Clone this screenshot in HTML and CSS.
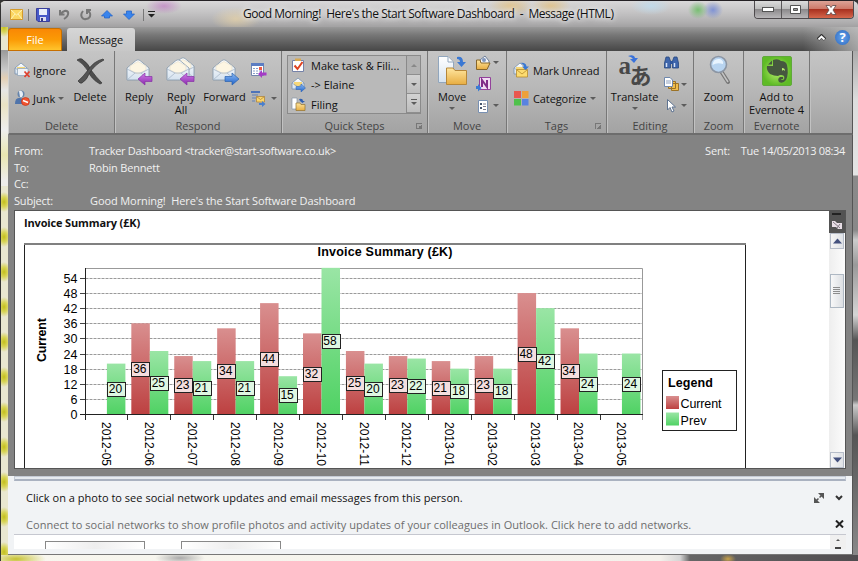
FILE: index.html
```html
<!DOCTYPE html>
<html lang="en">
<head>
  <meta charset="UTF-8">
  <title>Good Morning!  Here's the Start Software Dashboard - Message (HTML)</title>
  <link rel="stylesheet" href="styles.css">
</head>
<body>
  <svg class="defs" width="0" height="0">
    <defs>
      <linearGradient id="paper" x2="0" y2="1"><stop stop-color="#fff"/><stop offset="1" stop-color="#d5e2ef"/></linearGradient>
      <linearGradient id="folder" x2="0" y2="1"><stop stop-color="#ffe6a0"/><stop offset="1" stop-color="#e7ad41"/></linearGradient>
      <linearGradient id="purple" x2="0" y2="1"><stop stop-color="#d07be8"/><stop offset="1" stop-color="#8a2bae"/></linearGradient>
      <linearGradient id="blue" x2="0" y2="1"><stop stop-color="#8dbcf5"/><stop offset="1" stop-color="#1f62c9"/></linearGradient>
      <linearGradient id="red-bar" x2="0" y2="1"><stop stop-color="#d98f8f"/><stop offset="1" stop-color="#bd4141"/></linearGradient>
      <linearGradient id="green-bar" x2="0" y2="1"><stop stop-color="#9ae5a5"/><stop offset="1" stop-color="#50d264"/></linearGradient>
      <radialGradient id="lime"><stop stop-color="#b9f06e"/><stop offset="1" stop-color="#5fbb26"/></radialGradient>
      <g id="envelope">
        <path d="M2 11 11 3.500Q13 2 15 3.500L24 11V23H2z" fill="url(#paper)" stroke="#8295a8" stroke-width=".8"/>
        <path d="M5 9 13 4.500 21 9V13L13 17 5 13z" fill="#fdf6e3" stroke="#e2dccb" stroke-width=".6"/>
        <path d="M2 12 10 16H16L24 12M2 23 10 16M24 23 16 16" fill="none" stroke="#a8b8c8" stroke-width=".8"/>
      </g>
      <g id="mail-small">
        <path d="M1 6 7 1 13 6V12H1z" fill="url(#paper)" stroke="#7690ad" stroke-width=".8"/>
        <path d="M3 5H11V8L7 10 3 8z" fill="#f6d778"/>
        <path d="M1 6 7 10 13 6" fill="none" stroke="#8aa0b8" stroke-width=".8"/>
      </g>
    </defs>
  </svg>

  <div class="window">
    <header class="titlebar">
      <div class="quick">
        <svg class="q-mail" width="13" height="11" viewBox="0 0 13 11"><path d="M.5.5H12.500V10.500H.5z" fill="#fbd762" stroke="#d49a2b"/><path d="M1 1 6.500 6 12 1M1 10 5 5M12 10 8 5" fill="none" stroke="#fff3b8"/></svg>
        <i class="sep"></i>
        <svg class="q-save" width="14" height="14" viewBox="0 0 14 14"><path d="M.5.5H13.500V13.500H2L.5 12z" fill="#4759c8" stroke="#3a3f9c"/><path d="M3 1H11V7H3z" fill="#e9effa"/><path d="M4 9H10V13H4z" fill="#dde"/><path d="M5 10H7V13H5z" fill="#333b8a"/></svg>
        <svg class="q-undo" width="12" height="13" viewBox="0 0 12 13"><path d="M2 2V6.500H6.500M2.500 6Q7 1 10 4 11 8 6 11" fill="none" stroke="#777" stroke-width="2"/></svg>
        <svg class="q-redo" width="12" height="13" viewBox="0 0 12 13"><path d="M3 3C-1 8 3 12 6 11 12 10 11 3 7 3M7 6V2H11" fill="none" stroke="#777" stroke-width="2"/></svg>
        <svg class="q-up" width="12" height="9" viewBox="0 0 12 9"><path d="M6 .5 11.500 6H8.500V8H3.500V6H.5z" fill="#3984ed" stroke="#1d5fc6" stroke-width=".7"/></svg>
        <svg class="q-down" width="12" height="10" viewBox="0 0 12 10"><path d="M6 9.500 .5 4H3.500V1H8.500V4H11.500z" fill="#3984ed" stroke="#1d5fc6" stroke-width=".7"/></svg>
        <i class="sep"></i>
        <svg class="q-more" width="7" height="7" viewBox="0 0 7 7"><path d="M0 0H7V1H0zM0 3H7L3.500 6.500z" fill="#222"/></svg>
      </div>
      <div class="caption">Good Morning!  Here's the Start Software Dashboard  -  Message (HTML)</div>
      <div class="controls">
        <span class="control"><svg width="12" height="6"><rect x=".5" y=".5" width="11" height="4" fill="#fff" stroke="#555"/></svg></span>
        <span class="control"><svg width="11" height="9"><path d="M.5.5H10.500V8.500H.5z" fill="#fff" stroke="#555"/><path d="M3.500 3.500H7.500V5.500H3.500z" fill="#999" stroke="#555"/></svg></span>
        <span class="control close"><svg width="12" height="10" viewBox="0 0 12 10"><path d="M1 .5H4.500L6 2.500 7.500.5H11L8 5 11 9.500H7.500L6 7.500 4.500 9.500H1L4 5z" fill="#fff" stroke="#5a4a4a" stroke-width=".8"/></svg></span>
      </div>
    </header>

    <nav class="tabs">
      <span class="tab file">File</span>
      <span class="tab active">Message</span>
      <span class="help">
        <svg width="9" height="7" viewBox="0 0 9 7"><path d="M1 5.500 4.500 2 8 5.500" fill="none" stroke="#333" stroke-width="3.500"/><path d="M1.500 5.500 4.500 2.500 7.500 5.500" fill="none" stroke="#fff" stroke-width="1.800"/></svg>
        <span class="help-mark">?</span>
      </span>
    </nav>

    <section class="ribbon">
      <div class="group g-delete">
        <div class="tools">
          <div class="rows two">
            <div class="small"><svg width="17" height="16" viewBox="0 0 17 16"><use href="#mail-small"/><path d="M3.500 6.500H14V13.500H3.500z" fill="#eef3f8" stroke="#8aa0b8" stroke-width=".7"/><path d="M10.500 9.500 15.500 15M15.500 9.500 10.500 15" stroke="#e0412e" stroke-width="1.800"/></svg><span>Ignore</span></div>
            <div class="small"><svg width="17" height="16" viewBox="0 0 17 16"><circle cx="7" cy="4" r="3.500" fill="#6684ab"/><path d="M1 14Q1 7 6 8 11 8 11 14z" fill="#4f74ab"/><path d="M5 1Q9 0 9 5L8 7H6z" fill="#e8eef5"/><circle cx="11.500" cy="11.500" r="4" fill="#f25530" stroke="#c93016" stroke-width=".7"/><path d="M9 10.500 14 12.500" stroke="#fff" stroke-width="1.500"/></svg><span>Junk</span><i class="caret"></i></div>
          </div>
          <div class="big"><svg width="32" height="32" viewBox="0 0 32 32"><path d="M3 6Q6 4 8 5 15 10 17 16 22 23 28 29L26 30Q17 25 14 17 9 9 3 6z" fill="#4d4d4d" stroke="#353535" stroke-width=".7"/><path d="M29 5Q20 7 14 16 9 23 4 27 6 30 8 29 13 26 15 20 20 11 30 6z" fill="#555" stroke="#353535" stroke-width=".7"/></svg><span>Delete</span></div>
        </div>
        <div class="group-name">Delete</div>
      </div>

      <div class="group g-respond">
        <div class="tools">
          <div class="big"><svg width="30" height="32" viewBox="0 0 30 32"><use href="#envelope" x="1" y="3"/><path d="M14 25 21 19V22.500H28V27.500H21V31z" fill="url(#purple)" stroke="#8633a5" stroke-width=".7"/></svg><span>Reply</span></div>
          <div class="big"><svg width="30" height="32" viewBox="0 0 30 32"><use href="#envelope" x="4" y="1"/><use href="#envelope" x="-1" y="3"/><path d="M14 25 21 19V22.500H28V27.500H21V31z" fill="url(#purple)" stroke="#8633a5" stroke-width=".7"/></svg><span>Reply<br>All</span></div>
          <div class="big"><svg width="30" height="32" viewBox="0 0 30 32"><use href="#envelope" x="1" y="3"/><path d="M29 25 22 19V22.500H15V27.500H22V31z" fill="url(#blue)" stroke="#2b62ae" stroke-width=".7"/></svg><span>Forward</span></div>
          <div class="rows two">
            <div class="small"><svg width="17" height="16" viewBox="0 0 17 16"><path d="M1.500 1.500H13.500V13.500H1.500z" fill="#fff" stroke="#7286ad"/><path d="M1 1H14V4H1z" fill="#5c7dc2"/><path d="M3 6.500H12M3 9H12M3 11.500H10" stroke="#89a0c9" stroke-dasharray="2 1"/><path d="M9 5H12V8H9z" fill="#ef5b45"/><path d="M8 12 12 8V10.500H16.500V13.500H12V16z" fill="#a53bc5"/></svg></div>
            <div class="small"><svg width="17" height="17" viewBox="0 0 17 17"><path d="M1 2H10" stroke="#4e73b8" stroke-width="2"/><path d="M2 5H8M2 8H6M2 11H5" stroke="#7f93b5" stroke-width="1.500"/><path d="M6.500 6.500H14.500V12H6.500z" fill="#fbd66a" stroke="#af8540" stroke-width=".8"/><path d="M6.500 6.500 10.500 9.500 14.500 6.500" fill="none" stroke="#af8540" stroke-width=".8"/><path d="M9 13H12V11L15.500 14 12 17V15H9z" fill="#4a7fcd"/></svg><i class="caret"></i></div>
          </div>
        </div>
        <div class="group-name">Respond</div>
      </div>

      <div class="group g-quick">
        <div class="tools">
          <div class="gallery">
            <div class="steps">
              <div class="step"><svg width="15" height="15" viewBox="0 0 15 15"><path d="M1.500 2.500H12.500V13.500H1.500z" fill="#fff" stroke="#7582a8"/><path d="M4 .5H10V3H4z" fill="#d8a951"/><path d="M3.500 7.500 6.500 11 11.500 4" fill="none" stroke="#de4322" stroke-width="2"/></svg>Make task &amp; Fili...</div>
              <div class="step"><svg width="15" height="15" viewBox="0 0 15 15"><use href="#mail-small"/><path d="M14.500 11 10 7V9.500H5V12.500H10V15z" fill="url(#blue)" stroke="#2d62b2" stroke-width=".5"/></svg>-&gt; Elaine</div>
              <div class="step"><svg width="15" height="15" viewBox="0 0 15 15"><path d="M1 1H6V12H1z" fill="#fff" stroke="#8896a8" stroke-width=".7"/><path d="M8 2Q12 1 12 4H14L11.500 6 9 4" fill="#2f5fb0"/><path d="M5 6H9L10 7.500H14V13.500H5z" fill="url(#folder)" stroke="#94722e" stroke-width=".7"/></svg>Filing</div>
            </div>
            <div class="gallery-scroll"><span class="off"><i class="caret up"></i></span><span><i class="caret"></i></span><span class="more"><i class="caret"></i></span></div>
          </div>
        </div>
        <div class="group-name">Quick Steps</div><i class="launcher"></i>
      </div>

      <div class="group g-move">
        <div class="tools">
          <div class="big"><svg width="32" height="32" viewBox="0 0 32 32"><path d="M2.500 2.500H12L17.500 8V28.500H2.500z" fill="url(#paper)" stroke="#91a6bd"/><path d="M12 3V8H17" fill="#fff" stroke="#91a6bd"/><path d="M21 3Q27 2 27 8H30L25.500 13 21 8H24Q24 5 21 5z" fill="#3a78d3"/><path d="M10.500 14H17L19 16.500H30.500V30.500H10.500z" fill="url(#folder)" stroke="#b5873a"/></svg><span>Move</span><i class="caret"></i></div>
          <div class="rows three">
            <div class="small"><svg width="17" height="16" viewBox="0 0 17 16"><path d="M5 5 10 1 14 6V10H6z" fill="#f4f7fb" stroke="#6e7e98"/><circle cx="9" cy="5" r="2" fill="#8097bd"/><path d="M1.500 5H5L6 8H15L12 14.500H1.500z" fill="url(#folder)" stroke="#87662a"/></svg><i class="caret"></i></div>
            <div class="small"><svg width="17" height="16" viewBox="0 0 17 16"><path d="M4.500 1.500H15.500V13.500H4.500z" fill="#f1dbf3" stroke="#93429b"/><path d="M7 11V4L12 11V4" fill="none" stroke="#802b89" stroke-width="2"/><path d="M6.500 12 3 8V10H1V13H3V15.500z" fill="#3b7bd4"/></svg></div>
            <div class="small"><svg width="17" height="16" viewBox="0 0 17 16"><path d="M3.500 2.500H12.500V14.500H3.500z" fill="#fff" stroke="#7890b2"/><path d="M5 5H7V7H5zM5 9H7V11H5z" fill="#46566e"/><path d="M8 6H11M8 8.500H11M8 11.500H11" stroke="#778"/></svg><i class="caret"></i></div>
          </div>
        </div>
        <div class="group-name">Move</div>
      </div>

      <div class="group g-tags">
        <div class="tools">
          <div class="rows two">
            <div class="small"><svg width="17" height="16" viewBox="0 0 17 16"><use href="#mail-small"/><path d="M3.500 7.500H14.500V15H3.500z" fill="#fcdc70" stroke="#b78c2b" stroke-width=".8"/><path d="M4 8 9 12 14 8" fill="none" stroke="#b78c2b" stroke-width=".8"/><path d="M7 1Q13 0 13.500 4.500H16L12.500 8 9 4.500H11Q11 2 7 1z" fill="#3a78d3"/></svg><span>Mark Unread</span></div>
            <div class="small"><svg width="17" height="16" viewBox="0 0 17 16"><path d="M1 1H8V8H1z" fill="#e8584f"/><path d="M9 1H15.500V8H9z" fill="#eda03b"/><path d="M1 9H8V15.500H1z" fill="#4fc14b"/><path d="M9 9H15.500V15.500H9z" fill="#5983e0"/></svg><span>Categorize</span><i class="caret"></i></div>
          </div>
        </div>
        <div class="group-name">Tags</div><i class="launcher"></i>
      </div>

      <div class="group g-editing">
        <div class="tools">
          <div class="big"><span class="glyphs"><b>a</b><em>あ</em><svg width="10" height="8" viewBox="0 0 10 8"><path d="M0 1Q6-1 7 3H10L6 8 2 4H5Q4 2 0 1z" fill="#3a72da"/></svg></span><span>Translate</span><i class="caret"></i></div>
          <div class="rows three">
            <div class="small"><svg width="17" height="16" viewBox="0 0 17 16"><path d="M3 2H6L7.500 6V13H1.500V8zM11 2H14L15.500 8V13H9.500V6z" fill="#3f66ac" stroke="#27477f" stroke-width=".8"/><path d="M7 6H10V9H7z" fill="#2f569c"/><path d="M3.500 8V12M11.500 8V12" stroke="#d5e3f7" stroke-width="1.500"/></svg></div>
            <div class="small"><svg width="17" height="16" viewBox="0 0 17 16"><path d="M8.500 7.500H15.500V14.500H8.500zM5.500 5.500H12.500V12.500H5.500z" fill="#f0bd4c" stroke="#9b7226"/><path d="M1.500 1.500H7L9.500 4V10.500H1.500z" fill="#fff" stroke="#7089ae"/><path d="M3 5H8M3 7H8" stroke="#8da1bf"/></svg><i class="caret"></i></div>
            <div class="small"><svg width="17" height="16" viewBox="0 0 17 16"><path d="M4.500 1.500V12L7 9.500 9 14 11 13 9 9H12.500z" fill="#fff" stroke="#5e7391"/></svg><i class="caret"></i></div>
          </div>
        </div>
        <div class="group-name">Editing</div>
      </div>

      <div class="group g-zoom">
        <div class="tools">
          <div class="big"><svg width="32" height="32" viewBox="0 0 32 32"><path d="M18 17 25 28" stroke="#777" stroke-width="4" stroke-linecap="round"/><path d="M18 17 25 28" stroke="#c4c4c4" stroke-width="1.500"/><circle cx="15.500" cy="10.500" r="8" fill="#b8d4f0" stroke="#8c96a4" stroke-width="1.600"/><path d="M9.500 11Q10 4 17 5 21 7 20 10 14 8 9.500 11z" fill="#e8f4ff"/></svg><span>Zoom</span></div>
        </div>
        <div class="group-name">Zoom</div>
      </div>

      <div class="group g-evernote">
        <div class="tools">
          <div class="big"><svg width="32" height="32" viewBox="0 0 32 32"><rect x="1.500" y="2.500" width="29" height="29" rx="1.500" fill="url(#lime)" stroke="#60a93b"/><path d="M7 10.500 11 6.500V10.500zM12 6Q17 4 20 7 25 7 26 11 28 20 25 26 22 30 18 28 16 25 19 23H22V25H20Q20 26 22 26 24 25 23 22 20 20 17 22 13 22 9 20 5 16 6 12H12z" fill="#46583f"/><path d="M21 14Q24 14 24 17 22 15 21 17z" fill="#b9f06e"/></svg><span>Add to<br>Evernote 4</span></div>
        </div>
        <div class="group-name">Evernote</div>
      </div>
    </section>

    <section class="message-head">
      <div class="field"><span class="label">From:</span><span class="from">Tracker Dashboard &lt;tracker@start-software.co.uk&gt;</span><span class="sent">Sent:</span><span class="date">Tue 14/05/2013 08:34</span></div>
      <div class="field"><span class="label">To:</span><span class="to">Robin Bennett</span></div>
      <div class="field"><span class="label">Cc:</span></div>
      <div class="field"><span class="label">Subject:</span><span class="subject">Good Morning!  Here's the Start Software Dashboard</span></div>
    </section>

    <main class="message">
      <div class="content">
        <h1>Invoice Summary (£K)</h1>
        <svg class="chart" width="722" height="226" viewBox="24 243 722 226" id="chart">
          <path d="M24.500 469V243.500H745.500V469" fill="#fff" stroke="#222"/>
          <path d="M24 244H746" stroke="#808080" stroke-width="2"/>
          <text class="bold" x="317.500" y="256" textLength="135">Invoice Summary (£K)</text>
          <text class="bold" transform="translate(46 362) rotate(-90)" textLength="44">Current</text>
          <g id="plot"></g>
          <rect x="662.500" y="370.500" width="74" height="60" fill="#fff" stroke="#222"/>
          <text class="bold" x="668" y="387" textLength="45">Legend</text>
          <rect x="666" y="396" width="13" height="13" fill="url(#red-bar)"/>
          <rect x="666" y="412.500" width="13" height="13" fill="url(#green-bar)"/>
          <text class="key" x="680.500" y="408" textLength="41">Current</text>
          <text class="key" x="680.500" y="424.500" textLength="26">Prev</text>
        </svg>
      </div>
      <div class="scrollbar">
        <div class="split"><i></i><svg width="12" height="10" viewBox="0 0 12 10"><path d="M1 1H4L6 3H11V9H7L5 7H1z" fill="#e9dfe7"/><path d="M2 2 9 8M9 4 6 8" stroke="#827a84"/></svg></div>
        <div class="arrow"><svg width="9" height="6"><path d="M0 5.500H9L4.500.5z" fill="#44517e"/></svg></div>
        <div class="track"><div class="thumb"><i></i><i></i><i></i><i></i></div></div>
        <div class="arrow"><svg width="9" height="6"><path d="M0 .5H9L4.500 5.500z" fill="#44517e"/></svg></div>
      </div>
    </main>

    <footer class="people">
      <div class="splitter"></div>
      <div class="people-row">
        <span class="people-text">Click on a photo to see social network updates and email messages from this person.</span>
        <svg class="expand" width="10" height="10" viewBox="0 0 10 10"><path d="M2 8 8 2" stroke="#555" stroke-width="1.500" stroke-dasharray="3.500 1.500"/><path d="M4 0H10V6zM0 4V10H6z" fill="#555"/></svg>
        <svg width="8" height="6" viewBox="0 0 8 6"><path d="M1 1 4 4 7 1" fill="none" stroke="#333" stroke-width="2"/></svg>
      </div>
      <div class="people-row connect">
        <span class="connect-text">Connect to social networks to show profile photos and activity updates of your colleagues in Outlook. Click here to add networks.</span>
        <svg width="9" height="8" viewBox="0 0 9 8"><path d="M1 .5 8 7.500M8 .5 1 7.500" stroke="#222" stroke-width="2"/></svg>
      </div>
      <div class="photos"><i></i><i></i><span class="mini"><b></b><u></u></span></div>
    </footer>
  </div>

  <script src="chart.js"></script>
</body>
</html>
```
FILE: styles.css
```css
* {
  box-sizing: border-box;
}
body {
  margin: 0;
  width: 858px;
  height: 561px;
  overflow: hidden;
  font-family: "Open Sans", "Noto Sans", sans-serif;
  font-size: 11px;
  line-height: 13px;
  color: #111;
  background: #333;
}
svg {
  display: block;
  flex: none;
}
.defs {
  position: absolute;
}
.window {
  height: 561px;
  padding: 0 5px 0 8px;
  border-top: 1px solid #252125;
  border-radius: 6px 6px 0 0;
  overflow: hidden;
  background:
    linear-gradient(#333, #333) 0 0 / 1px 100% no-repeat,
    radial-gradient(ellipse 30px 8px at 16px 558px, #c6c233, transparent),
    radial-gradient(ellipse 25px 6px at 180px 557px, #aaa, transparent),
    radial-gradient(ellipse 8px 5px at 728px 558px, #c9a24a, transparent),
    linear-gradient(90deg, #f8f7ef 0, #f4f2ec 660px, #d5d5d5 680px, #666 690px, #504d50 858px) 0 554px / 858px 7px no-repeat,
    linear-gradient(#999, #c9c9c9 20px, #e3cfb4 28px, #e6e6e6 40px, #eae3c4 55px, #eee 80px, #e9e6b0 105px, #eeedea 130px) 0 49px / 8px 136px no-repeat,
    radial-gradient(ellipse 7px 10px at 4px 17px, #c3bf1c, #d8d55a 50%, #e9e7d0) 0 184px / 8px 35px repeat-y,
    linear-gradient(#aaa, #ddd 50px, #e4e4e4 125px, #8a8a8a 126px, #888 180px, #ccc 190px, #999 215px, #d5d5d5 265px, #555 290px, #777 350px, #ccc 355px, #555 385px, #888 505px) 853px 49px / 5px 505px no-repeat,
    #aaa;
}

/* title bar */
.titlebar {
  display: flex;
  height: 26px;
  margin: 0 -5px 0 -8px;
  border-left: 1px solid #333;
  background:
    radial-gradient(ellipse 18px 8px at 163px 5px, rgba(184,90,190,.5), transparent),
    radial-gradient(ellipse 25px 12px at 235px 18px, rgba(255,225,160,.5), transparent),
    radial-gradient(ellipse 22px 10px at 510px 5px, rgba(229,190,115,.7), transparent),
    radial-gradient(ellipse 20px 10px at 550px 5px, rgba(229,190,115,.7), transparent),
    radial-gradient(ellipse 20px 9px at 650px 5px, rgba(190,221,240,.8), transparent),
    radial-gradient(ellipse 10px 9px at 697px 9px, #78bf72, transparent),
    radial-gradient(ellipse 10px 9px at 712px 9px, #8093d4, transparent),
    linear-gradient(#d9d8d9, #c3c2c3 12px, #b0afb0 21px, #a2a1a2);
}
.quick {
  display: flex;
  align-items: center;
  width: 242px;
  padding: 1px 0 0 9px;
}
.sep {
  width: 1px;
  height: 12px;
  background: #777;
  margin: 0 7px 0 5px;
}
.q-undo { margin-left: 8px; }
.q-redo { margin-left: 10px; }
.q-up { margin-left: 9px; }
.q-down { margin-left: 10px; }
.q-down + .sep { margin: 0 4px 0 8px; }
.caption {
  width: 504px;
  padding-top: 6px;
  font-size: 12px;
  line-height: 14px;
  letter-spacing: -.47px;
  white-space: pre;
  text-shadow: 0 0 5px #fff, 0 0 8px #fff;
}
.controls {
  display: flex;
  width: 100px;
  height: 18px;
  margin-left: 7px;
  border: 1px solid #4e4a4d;
  border-top: 0;
  border-radius: 0 0 4px 4px;
  overflow: hidden;
}
.control {
  display: flex;
  align-items: center;
  justify-content: center;
  width: 27px;
  border-right: 1px solid #5a5759;
  background: linear-gradient(#dcdcdc, #bbb 48%, #8c8a8c 50%, #b8b6b8);
}
.control.close {
  flex: 1;
  border: 0;
  background: linear-gradient(#dca397, #cd7767 48%, #a93120 50%, #d5664b);
}

/* tabs */
.tabs {
  display: flex;
  align-items: flex-end;
  height: 24px;
  margin-right: -5px;
  background:
    linear-gradient(90deg, transparent 795px, rgba(200,200,200,.7) 850px),
    linear-gradient(#999 0, #777 8px, #555 19px, #474747);
}
.tab {
  height: 23px;
  padding-top: 5px;
  text-align: center;
  border-radius: 3px 3px 0 0;
}
.file {
  width: 54px;
  color: #fff;
  border: 1px solid #c76f00;
  padding-top: 4px;
  background: linear-gradient(#f98805, #fb9a05 50%, #ffc42c);
}
.active {
  width: 68px;
  margin-left: 5px;
  background: linear-gradient(#d6d6d6, #c7c7c7);
  letter-spacing: -.1px;
}
.help {
  display: flex;
  align-items: center;
  gap: 9px;
  margin-left: auto;
  height: 24px;
  padding: 0 8px 3px 0;
}
.help-mark {
  width: 15px;
  height: 15px;
  border-radius: 50%;
  background: radial-gradient(#66a4ed, #2c68be);
  color: #fff;
  font-weight: bold;
  font-size: 13px;
  line-height: 15px;
  text-align: center;
}

/* ribbon */
.ribbon {
  display: flex;
  height: 84px;
  background: linear-gradient(#c5c5c5, #b8b8b8 45%, #a3a3a3);
  border-bottom: 2px solid #6d6d6d;
  border-right: 1px solid #555;
  border-left: 1px solid #d0d0d0;
}
.group {
  position: relative;
  height: 82px;
  border-right: 1px solid #777;
  box-shadow: 1px 0 #c2c2c2;
}
.tools {
  display: flex;
  height: 68px;
}
.group-name {
  text-align: center;
  color: #444;
  line-height: 14px;
}
.g-delete { width: 106px; }
.g-respond { width: 167px; }
.g-quick { width: 146px; }
.g-move { width: 79px; }
.g-tags { width: 100px; }
.g-editing { width: 87px; }
.g-zoom { width: 50px; }
.g-evernote { width: 66px; }
.big {
  display: flex;
  flex-direction: column;
  align-items: center;
  padding-top: 3px;
  text-align: center;
  white-space: nowrap;
}
.big > span:not(.glyphs) { margin-top: 4px; }
.big .caret { margin: 4px 0 0; }
.small {
  display: flex;
  align-items: center;
  white-space: nowrap;
}
.two .small { height: 28px; }
.two { padding-top: 5px; }
.three .small { height: 21.5px; }
.three { padding-top: 1px; }
.caret {
  width: 0;
  height: 0;
  margin-left: 4px;
  border: 3px solid transparent;
  border-top: 3px solid #5c5c5c;
  border-bottom: 0;
}
.g-delete .rows { width: 60px; padding-left: 5px; }
.g-delete .small { gap: 2px; }
.g-delete .small .caret { margin-left: 1px; }
.g-delete .big { width: 44px; margin-left: -1px; }
.g-respond .big { width: 42px; }
.g-respond .tools { padding-left: 3px; }
.g-respond .big:nth-child(3) { width: 45px; }
.g-respond .rows { padding-left: 3px; }
.g-move .big { width: 46px; padding-left: 2px; }
.g-move .rows { padding-left: 1px; }
.g-move .small .caret,
.g-editing .small .caret { margin-left: 1px; }
.g-tags .rows { padding-left: 6px; }
.g-tags .small { gap: 3px; letter-spacing: -.1px; }
.g-tags .small .caret { margin-left: 1px; }
.g-editing .big { width: 55px; }
.g-editing .rows { padding-left: 1px; }
.g-zoom .big,
.g-evernote .big { width: 100%; }
.glyphs {
  position: relative;
  width: 32px;
  height: 32px;
  color: #484848;
}
.glyphs b {
  position: absolute;
  left: 0;
  top: 4px;
  font: bold 25px/16px "Liberation Serif", serif;
}
.glyphs em {
  position: absolute;
  left: 11px;
  top: 10px;
  font: bold 22px/20px "Noto Sans CJK JP", sans-serif;
}
.glyphs svg {
  position: absolute;
  left: 9px;
  top: 1px;
}
.gallery {
  display: flex;
  width: 134px;
  height: 59px;
  margin: 4px 0 0 5px;
  border: 1px solid #8a8a8a;
  background: #b9b9b9;
}
.steps {
  width: 118px;
  padding-left: 3px;
}
.step {
  display: flex;
  align-items: center;
  gap: 5px;
  height: 19.3px;
  white-space: nowrap;
}
.gallery-scroll {
  display: grid;
  grid-template-rows: repeat(3, 19px);
  width: 14px;
  border-left: 1px solid #8a8a8a;
}
.gallery-scroll span {
  display: grid;
  place-items: center;
  border-bottom: 1px solid #8e8e8e;
  background: linear-gradient(#d2d2d2, #bdbdbd);
}
.gallery-scroll .off { background: #b2b2b2; }
.gallery-scroll .caret { margin: 0; }
.gallery-scroll .up {
  border-top: 0;
  border-bottom: 3px solid #888;
}
.more .caret {
  position: relative;
}
.more .caret::before {
  content: "";
  position: absolute;
  left: -3px;
  top: -6px;
  width: 6px;
  height: 1px;
  background: #5c5c5c;
}
.launcher {
  position: absolute;
  right: 5px;
  bottom: 4px;
  width: 6px;
  height: 6px;
  border-left: 1px solid #777;
  border-top: 1px solid #777;
  background: linear-gradient(135deg, transparent 50%, #777 50%);
}

/* message header */
.message-head {
  height: 75px;
  padding: 8px 7px 0 6px;
  background: #838383;
  color: #f1f1f1;
  border-right: 1px solid #555;
}
.field {
  display: flex;
  height: 16.6px;
  line-height: 16px;
  white-space: pre;
}
.label {
  width: 75px;
  letter-spacing: -.2px;
}
.from { letter-spacing: -.31px; }
.sent {
  margin-left: auto;
  margin-right: 11px;
  letter-spacing: -.2px;
}
.to { letter-spacing: -.2px; }
.subject {
  margin-left: 1px;
  letter-spacing: -.1px;
}
.date { letter-spacing: -.35px; }

/* message body */
.message {
  display: flex;
  height: 266px;
  padding: 0 6px 7px;
  background: #838383;
  border-right: 1px solid #555;
}
.content {
  width: 816px;
  height: 259px;
  overflow: hidden;
  border: solid #555;
  border-width: 1px 0 1px 1px;
  background: #fff;
}
h1 {
  height: 32px;
  margin: 0;
  padding: 5px 0 0 9px;
  font-size: 11px;
  line-height: 14px;
  letter-spacing: -.15px;
}
.chart {
  margin-left: 9px;
  font: 12px "Liberation Sans", Arial, sans-serif;
}
.chart .bold {
  font-size: 12.5px;
  font-weight: bold;
}
.chart .key { font-size: 12.5px; }
.scrollbar {
  display: flex;
  flex-direction: column;
  width: 17px;
  height: 259px;
  border: 1px solid #555;
  border-left: 0;
  background: linear-gradient(90deg, #eee, #fcfcfc);
}
.split {
  height: 22px;
  padding: 2px 0 0 2px;
  background: #535353;
}
.split i {
  display: block;
  width: 9px;
  height: 2px;
  margin: 0 0 5px 1px;
  background: #222;
}
.arrow {
  display: grid;
  place-items: center;
  width: 14px;
  height: 16px;
  margin-left: 1px;
  border: 1px solid #b6bdc9;
  background: linear-gradient(90deg, #f5f5f5, #dfe2e6);
}
.track {
  flex: 1;
  padding: 25px 1px 0;
}
.thumb {
  width: 14px;
  height: 34px;
  padding: 12px 3px 0 2px;
  border: 1px solid #aeb8c3;
  background: linear-gradient(90deg, #f8f8f8, #dcdfe3);
}
.thumb i {
  display: block;
  height: 1px;
  margin-bottom: 1px;
  background: #8d8d8d;
}

/* people pane */
.people {
  height: 79px;
  padding: 0 6px;
  background: #f1f3f5;
  border-right: 1px solid #555;
  border-bottom: 1px solid #777;
}
.splitter {
  height: 5px;
  border: 1px solid #c5cbd5;
  border-bottom: 2px solid #aab2c0;
  background: #e7ebf0;
}
.people-row {
  display: flex;
  align-items: center;
  height: 33px;
  padding: 0 3px 0 12px;
}
.people-text { letter-spacing: .02px; }
.expand { margin: 0 11px 0 auto; }
.connect {
  height: 20px;
  padding-right: 2px;
  color: #6d6d6d;
}
.connect-text { letter-spacing: .05px; }
.connect svg { margin-left: auto; }
.photos {
  display: flex;
  height: 15px;
  border-top: 1px solid #c6c8d0;
  padding: 6px 0 0 31px;
  background: #fff;
}
.photos > i {
  width: 100px;
  height: 8px;
  margin-right: 36px;
  border: 1px solid #888;
  border-bottom: 0;
  background: linear-gradient(90deg, #fff, #eee, #fff);
}
.mini {
  display: flex;
  flex-direction: column;
  align-items: center;
  gap: 6px;
  width: 16px;
  height: 14px;
  margin: -6px 0 0 auto;
  padding-top: 4px;
  background: #f0f0f0;
}
.mini b {
  border: 2px solid transparent;
  border-top: 0;
  border-bottom: 2px solid #555;
}
.mini u {
  width: 6px;
  height: 2px;
  background: #444;
}
```
FILE: chart.js
```javascript
const months = [
  ["2012-05", 0, 20], ["2012-06", 36, 25], ["2012-07", 23, 21], ["2012-08", 34, 21],
  ["2012-09", 44, 15], ["2012-10", 32, 58], ["2012-11", 25, 20], ["2012-12", 23, 22],
  ["2013-01", 21, 18], ["2013-02", 23, 18], ["2013-03", 48, 42], ["2013-04", 34, 24],
  ["2013-05", 0, 24]
];
const left = 85.5, base = 414, unit = 2.52, step = 42.92;
let grid = "", bars = "", labels = "";

for (let v = 0; v <= 54; v += 6) {
  const y = Math.round(base - v * unit) + 0.5;
  if (v) grid += `<path d="M${left} ${y}H643" stroke="#9a9a9a" stroke-dasharray="3 1"/>`;
  grid += `<path d="M80 ${y}H${left}" stroke="#444"/>`;
  grid += `<text x="77.5" y="${y + 4}" text-anchor="end" font-size="12.5">${v}</text>`;
}

function bar(x, value, fill, tint) {
  if (!value) return;
  const h = value * unit;
  const mid = Math.round(base - h / 2) + 0.5;
  bars += `<rect x="${x}" y="${base - h}" width="18.5" height="${h}" fill="url(#${fill})"/>`;
  labels += `<rect x="${Math.round(x) + 0.5}" y="${mid - 7}" width="18" height="14" fill="${tint}" stroke="#222"/>`;
  labels += `<text x="${x + 8.5}" y="${mid + 3.5}" text-anchor="middle">${value}</text>`;
}

months.forEach(([name, current, prev], i) => {
  const x = left + i * step;
  bar(x + 2.9, current, "red-bar", "#f4dede");
  bar(x + 21.4, prev, "green-bar", "#dff7e2");
  grid += `<path d="M${Math.round(x) - 0.5} 414V420" stroke="#333"/>`;
  labels += `<text transform="translate(${x + 16.5} 422) rotate(90)" textLength="44">${name}</text>`;
});

document.getElementById("plot").innerHTML =
  `<path d="M${left} 268.5H642.5V420" fill="none" stroke="#999"/>` + grid + bars +
  `<path d="M85.5 268V420M80 414.5H643" fill="none" stroke="#222"/>` + labels;
```
